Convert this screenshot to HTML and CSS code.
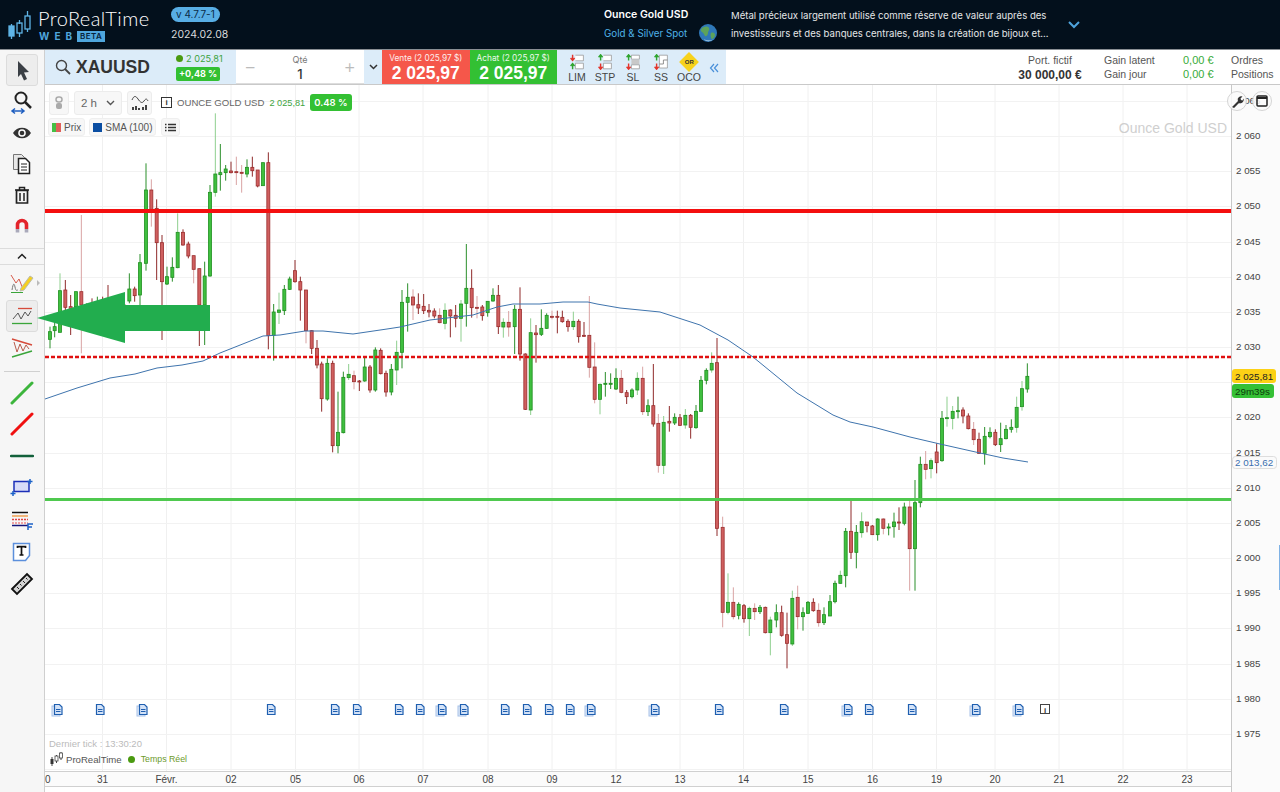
FILE: index.html

```html
<!DOCTYPE html>
<html lang="fr">
<head>
    <meta charset="UTF-8">
    <title>ProRealTime Web</title>
    <link rel="stylesheet" href="styles.css">
</head>
<body>
    <header class="topbar">
        <svg class="logo-mark" width="24" height="30" viewBox="0 0 24 30">
            <g fill="none" stroke="#5fb4e6" stroke-width="1.3">
                <path d="M3.5 14v3M3.5 29v-3M11.5 10v4M11.5 23v4M19.5 1v5M19.5 19v3"/>
                <rect x="1" y="16" width="5" height="10" fill="#5fb4e6"/>
                <rect x="9" y="13" width="5" height="10"/>
                <rect x="17" y="6" width="5" height="13"/>
            </g>
        </svg>
        <div class="brand">
            <div class="brand-name">ProRealTime</div>
            <div class="brand-sub"><span class="brand-web">WEB</span><span class="brand-beta">BETA</span></div>
        </div>
        <div class="release">
            <span class="version">v 4.7.7-1</span>
            <span class="release-date">2024.02.08</span>
        </div>
        <div class="instrument">
            <b>Ounce Gold USD</b>
            <span>Gold &amp; Silver Spot</span>
        </div>
        <svg class="globe" width="18" height="18" viewBox="0 0 18 18">
            <circle cx="9" cy="9" r="9" fill="#2f78b8"/>
            <path d="M3 4c3-2 6-2 7 0 1 2-1 3-1 5s-2 4-3 3-1-3-3-4-1-3 0-4zM12 9c2-1 4 0 4 2s-2 4-3 4-2-5-1-6z" fill="#5da35a"/>
            <path d="M5 15c3 2 7 2 9 0-2 3-7 3-9 0z" fill="#cfe3ee"/>
        </svg>
        <p class="description">Métal précieux largement utilisé comme réserve de valeur auprès des<br>investisseurs et des banques centrales, dans la création de bijoux et...</p>
        <svg class="expand" width="14" height="10" viewBox="0 0 14 10"><path d="M2 2l5 5 5-5" fill="none" stroke="#4ea3dc" stroke-width="2"/></svg>
    </header>

    <div class="workspace">
        <nav class="sidebar">
            <button class="tool tool-active">
                <svg width="20" height="24" viewBox="0 0 20 24"><path d="M6 3l11 11-5 .5 3 6.5-3 1.5-3-6.5-3 3z" fill="#3a3f45"/></svg>
            </button>
            <div class="tool">
                <svg width="26" height="26" viewBox="0 0 26 26"><circle cx="12" cy="9" r="5.5" fill="none" stroke="#222" stroke-width="2"/><path d="M16 13l6 6" stroke="#222" stroke-width="2.5"/><path d="M3 22h12M6 19.500L3 22l3 2.500M12 19.500l3 2.5-3 2.5" fill="none" stroke="#1f5fc0" stroke-width="1.5"/></svg>
            </div>
            <div class="tool">
                <svg width="20" height="14" viewBox="0 0 20 14"><path d="M1 7c4-7 14-7 18 0-4 7-14 7-18 0z" fill="#333"/><circle cx="10" cy="7" r="3.8" fill="#fff"/><circle cx="10" cy="7" r="2.3" fill="#333"/></svg>
            </div>
            <div class="tool">
                <svg width="20" height="22" viewBox="0 0 20 22"><path d="M1.500 1.500h8l3 3v12h-11z" fill="#e8e8e8" stroke="#777"/><path d="M6.500 5.500h7l4 4v11h-11z" fill="#fff" stroke="#222" stroke-width="1.5"/><path d="M9 11h6M9 14h6M9 17h6" stroke="#222"/></svg>
            </div>
            <div class="tool">
                <svg width="16" height="18" viewBox="0 0 16 18"><path d="M1 4h14M5.500 4V1.500h5V4" fill="none" stroke="#222" stroke-width="1.5"/><path d="M2.500 4.500h11V17h-11z" fill="none" stroke="#222" stroke-width="1.7"/><path d="M6 7v8M10 7v8" stroke="#222" stroke-width="1.5"/></svg>
            </div>
            <div class="tool">
                <svg width="14" height="15" viewBox="0 0 14 15"><path d="M2.500 11V7a4.500 4.500 0 0 1 9 0v4" fill="none" stroke="#e3242b" stroke-width="3.6"/><path d="M.7 11h3.600v3.500H.7zM9.700 11h3.600v3.500H9.700z" fill="#aab"/></svg>
            </div>
            <div class="tool-collapse">
                <svg width="10" height="7" viewBox="0 0 10 7"><path d="M1 5.500l4-4 4 4" fill="none" stroke="#222" stroke-width="1.5"/></svg>
            </div>
            <div class="tool tool-draw">
                <svg width="24" height="24" viewBox="0 0 24 24"><path d="M1 5l5 8 3-4 4 10" fill="none" stroke="#d85a4a"/><path d="M2 20c1-6 2-8 3-3s2 3 3 3" fill="none" stroke="#777"/><path d="M1 22.500h12" stroke="#3aa53a"/><path d="M11 18l9-12 3 2-9 12-4 1z" fill="#f5d020" stroke="#bba"/></svg>
                <i class="more"></i>
            </div>
            <button class="tool tool-active tool-channel">
                <svg width="22" height="18" viewBox="0 0 22 18"><path d="M7 1.500h14" stroke="#d64a3a" stroke-width="1.3"/><path d="M1 16.500h20" stroke="#3aa53a" stroke-width="1.3"/><path d="M2 12l5-6 3 6 4-7 3 4 3-5" fill="none" stroke="#555"/></svg>
            </button>
            <div class="tool tool-draw">
                <svg width="22" height="22" viewBox="0 0 22 22"><path d="M1 2l20 6" stroke="#d64a3a" stroke-width="1.5"/><path d="M1 20l20-6" stroke="#3aa53a" stroke-width="1.5"/><path d="M3 5l3 10 3-8 3 7 3-6 3 4" fill="none" stroke="#b85a4a"/></svg>
            </div>
            <hr class="tool-sep">
            <div class="tool tool-line"><svg width="24" height="24" viewBox="0 0 24 24"><path d="M2 22L22 2" stroke="#3cb53c" stroke-width="3" stroke-linecap="round"/></svg></div>
            <div class="tool tool-line"><svg width="24" height="24" viewBox="0 0 24 24"><path d="M2 22L22 2" stroke="#f01010" stroke-width="3" stroke-linecap="round"/></svg></div>
            <div class="tool tool-line"><svg width="24" height="6" viewBox="0 0 24 6"><path d="M1 3h22" stroke="#12603a" stroke-width="2.5" stroke-linecap="round"/></svg></div>
            <div class="tool tool-line"><svg width="24" height="18" viewBox="0 0 24 18"><rect x="4" y="3.500" width="15" height="10" fill="#d8dcf8" stroke="#1c2fb8" stroke-width="1.5"/><path d="M20 1v5M17.500 3.500h5M3 13v5M.5 15.500h5" stroke="#1c62c8" stroke-width="1.5"/></svg></div>
            <div class="tool tool-line tool-fib"><svg width="24" height="20" viewBox="0 0 24 20"><path d="M2 1.500h16" stroke="#111" stroke-width="1.5"/><path d="M2 5h16" stroke="#f0a050" stroke-width="1.5"/><path d="M2 8.500h16" stroke="#e04040" stroke-width="1.5" stroke-dasharray="2 1"/><path d="M2 12h16" stroke="#e88" stroke-width="1.5" stroke-dasharray="2 1"/><path d="M2 14.500h16" stroke="#14147a" stroke-width="1.5"/><path d="M18 19v-6h5M18 16h4" fill="none" stroke="#1c62c8" stroke-width="1.5"/></svg></div>
            <div class="tool tool-line"><svg width="20" height="20" viewBox="0 0 20 20"><path d="M1.500 1.500h16v12l-4 5h-12z" fill="#fff" stroke="#5b8fdc" stroke-width="1.5"/><path d="M5.500 6V4.700h8V6M9.500 5v8M7.500 13h4" fill="none" stroke="#111" stroke-width="1.7"/></svg></div>
            <div class="tool tool-line"><svg width="24" height="24" viewBox="0 0 24 24"><path d="M2 17L17 2l5 5L7 22z" fill="#d4d4d4" stroke="#111" stroke-width="1.8"/><path d="M7 15l2 2M10 12l1.500 1.500M13 9l2 2M16 6l1.500 1.500" stroke="#222"/></svg></div>
        </nav>

        <main class="main">
            <section class="tradebar">
                <div class="symbol">
                    <svg width="16" height="16" viewBox="0 0 16 16"><circle cx="6.500" cy="6.500" r="5" fill="none" stroke="#444" stroke-width="1.4"/><path d="M10 10l5 5" stroke="#444" stroke-width="1.8"/></svg>
                    <b class="symbol-name">XAUUSD</b>
                    <div class="symbol-quote">
                        <span class="symbol-last"><i class="dot"></i>2 025,81</span>
                        <span class="symbol-change">+0,48 %</span>
                    </div>
                </div>
                <div class="qty">
                    <span class="qty-step">−</span>
                    <div class="qty-value"><small>Qté</small><b>1</b></div>
                    <span class="qty-step">+</span>
                </div>
                <div class="qty-menu"><svg width="9" height="6" viewBox="0 0 9 6"><path d="M1 1l3.500 3.500L8 1" fill="none" stroke="#333" stroke-width="1.5"/></svg></div>
                <div class="side side-sell"><small>Vente (2 025,97 $)</small><b>2 025,97</b></div>
                <div class="side side-buy"><small>Achat (2 025,97 $)</small><b>2 025,97</b></div>
                <div class="orders">
                    <div class="order">
                        <svg width="18" height="20" viewBox="0 0 18 20"><path d="M7 1.500h10v7H7M7 11.500h10v7H7z" fill="#fff" stroke="#999"/><path d="M3.500 1v6M1 5l2.500 3L6 5" fill="none" stroke="#e3342b" stroke-width="1.8"/><path d="M3.500 19v-6M1 15l2.500-3L6 15" fill="none" stroke="#2fa52f" stroke-width="1.8"/></svg>
                        <span>LIM</span>
                    </div>
                    <div class="order">
                        <svg width="18" height="20" viewBox="0 0 18 20"><path d="M7 1.500h10v7H7M7 11.500h10v7H7z" fill="#fff" stroke="#999"/><path d="M3.500 8V2M1 4l2.500-3L6 4" fill="none" stroke="#2fa52f" stroke-width="1.8"/><path d="M3.500 12v6M1 16l2.500 3L6 16" fill="none" stroke="#e3342b" stroke-width="1.8"/></svg>
                        <span>STP</span>
                    </div>
                    <div class="order">
                        <svg width="18" height="20" viewBox="0 0 18 20"><path d="M7 1.500h10v5H7z" fill="#fff" stroke="#999"/><path d="M7 7h10v6H7z" fill="#c8c8c8"/><path d="M7 13.500h10v5H7z" fill="#fff" stroke="#999"/><path d="M3.500 8V2M1 4l2.500-3L6 4" fill="none" stroke="#2fa52f" stroke-width="1.8"/><path d="M3.500 12v6M1 16l2.500 3L6 16" fill="none" stroke="#e3342b" stroke-width="1.8"/></svg>
                        <span>SL</span>
                    </div>
                    <div class="order">
                        <svg width="18" height="20" viewBox="0 0 18 20"><path d="M7 1.500h10v16H7z" fill="#fff" stroke="#999"/><path d="M7 12.500h5v-5h5" fill="none" stroke="#777"/><path d="M3.500 8V2M1 4l2.500-3L6 4" fill="none" stroke="#2fa52f" stroke-width="1.8"/><path d="M3.500 12v6M1 16l2.500 3L6 16" fill="none" stroke="#e3342b" stroke-width="1.8"/></svg>
                        <span>SS</span>
                    </div>
                    <div class="order">
                        <div class="oco-mark"><em>OR</em></div>
                        <span>OCO</span>
                    </div>
                    <svg class="orders-fold" width="10" height="10" viewBox="0 0 10 10"><path d="M5 1L1.500 5 5 9M9 1L5.500 5 9 9" fill="none" stroke="#4a90d9" stroke-width="1.2"/></svg>
                </div>
                <div class="account">
                    <div class="account-balance"><span>Port. fictif</span><b>30 000,00 €</b></div>
                    <div class="account-labels"><span>Gain latent</span><span>Gain jour</span></div>
                    <div class="account-gains"><span>0,00 €</span><span>0,00 €</span></div>
                    <div class="account-links"><span>Ordres</span><span>Positions</span></div>
                </div>
            </section>

            <section class="chart">
                <div class="plot">
                    <svg id="plot" width="1186" height="686" viewBox="45 85 1186 686"></svg>
                    <div class="legend">
                        <div class="legend-row">
                            <span class="chart-btn btn-lock"><svg width="8" height="14" viewBox="0 0 8 14"><rect x="1" y="1" width="6" height="5" rx="2.500" fill="none" stroke="#aaa" stroke-width="1.5"/><rect x="1" y="7" width="6" height="6" rx="2" fill="#aaa"/></svg></span>
                            <span class="chart-btn btn-period">2 h<svg width="9" height="6" viewBox="0 0 9 6"><path d="M1 1l3.500 3.500L8 1" fill="none" stroke="#555" stroke-width="1.4"/></svg></span>
                            <span class="chart-btn btn-indic"><svg width="18" height="16" viewBox="0 0 18 16"><path d="M1 5c2-5 4-4 6-1s4 5 6 2 3-2 4 0" fill="none" stroke="#444"/><path d="M2 15v-3M5 15v-4M8 15v-2M12 15v-3M15 15v-5" stroke="#444" stroke-width="2"/></svg></span>
                            <span class="info-mark">i</span>
                            <span class="legend-name">OUNCE GOLD USD</span>
                            <span class="legend-last">2 025,81</span>
                            <span class="legend-change">0.48 %</span>
                        </div>
                        <div class="legend-row legend-series">
                            <span class="chip"><i class="swatch-price"></i>Prix</span>
                            <span class="chip"><i class="swatch-sma"></i>SMA (100)</span>
                            <span class="chip chip-list"><svg width="11" height="9" viewBox="0 0 11 9"><path d="M3 1.500h8M3 4.500h8M3 7.500h8" stroke="#333" stroke-width="1.3"/><path d="M0 1.500h1.500M0 4.500h1.500M0 7.500h1.500" stroke="#333" stroke-width="1.5"/></svg></span>
                        </div>
                    </div>
                    <div class="watermark">Ounce Gold USD</div>
                    <div class="tick-info">
                        <div class="tick-time">Dernier tick : 13:30:20</div>
                        <div class="tick-source">
                            <svg width="13" height="14" viewBox="0 0 13 14"><path d="M2 5v9M6.500 3v8M11 0v8" stroke="#444"/><rect x=".5" y="7" width="3" height="5" fill="#333"/><rect x="5" y="4" width="3" height="5" fill="#fff" stroke="#444" stroke-width=".8"/><rect x="9.500" y="1" width="3" height="5" fill="#fff" stroke="#444" stroke-width=".8"/></svg>
                            <span>ProRealTime</span><i class="dot"></i><em>Temps Réel</em>
                        </div>
                    </div>
                </div>
                <div class="price-axis">
                    <svg id="prices" width="48" height="707" viewBox="1232 85 48 707"></svg>
                    <i class="scroll-mark"></i>
                </div>
                <div class="time-axis">
                    <svg id="times" width="1186" height="15" viewBox="45 772 1186 15"></svg>
                </div>
                <div class="chart-tools">
                    <span class="round-btn"><svg width="13" height="13" viewBox="0 0 13 13"><path d="M1 12l6-6a3.500 3.500 0 0 1 4.500-4.500L9.500 3.500l.5 1.500 1.500.5 1-2A3.500 3.500 0 0 1 8 8l-5 5z" fill="#333"/></svg></span>
                    <span class="round-btn"><svg width="12" height="12" viewBox="0 0 12 12"><rect x="1" y="1" width="10" height="10" rx="1" fill="none" stroke="#222" stroke-width="1.5"/><path d="M1 3h10" stroke="#222" stroke-width="2"/></svg></span>
                </div>
            </section>
        </main>
    </div>

    <svg class="arrow-note" width="1280" height="792" viewBox="0 0 1280 792">
        <polygon points="37,318 125,292 125,305 210,305 210,331 125,331 125,343" fill="#22ad4e"/>
    </svg>

    <script src="chart.js"></script>
</body>
</html>
```

FILE: styles.css

```css
* {
    box-sizing: border-box;
}

body, html {
    margin: 0;
    padding: 0;
    width: 100%;
    height: 100%;
    overflow: hidden;
    background-color: white;
    font-family: "Liberation Sans", Arial, sans-serif;
    color: #444;
}

/* top bar */
.topbar {
    height: 50px;
    display: flex;
    align-items: center;
    background-color: #03101c;
    border-bottom: 1px solid #8a8f94;
    color: #e4e6e8;
    font-family: Inter, sans-serif;
}

.logo-mark {
    margin-left: 8px;
    flex: none;
}

.brand {
    width: 133px;
    margin-left: 6px;
}

.brand-name {
    font-family: Lato, sans-serif;
    font-weight: 300;
    font-size: 20px;
    line-height: 22px;
    letter-spacing: 0.4px;
    color: white;
}

.brand-sub {
    display: flex;
    align-items: center;
    margin-top: 1px;
}

.brand-web {
    margin-left: 1px;
    font-size: 10px;
    font-weight: 700;
    letter-spacing: 5px;
    color: #4fa6dd;
}

.brand-beta {
    background-color: #4fa6dd;
    color: #06223a;
    font-size: 8px;
    font-weight: 600;
    line-height: 11px;
    padding: 0 3px;
    letter-spacing: 0.4px;
}

.release {
    width: 433px;
    display: flex;
    flex-direction: column;
    align-items: flex-start;
    gap: 6px;
}

.version {
    background-color: #58aee5;
    color: #0b2c48;
    font-size: 10px;
    line-height: 15px;
    padding: 0 5px;
    border-radius: 8px;
}

.release-date {
    font-size: 10.5px;
    line-height: 14px;
    color: #d8dadc;
}

.instrument {
    width: 95px;
    display: flex;
    flex-direction: column;
    gap: 7px;
    font-size: 10.5px;
    line-height: 12px;
    white-space: nowrap;
}

.instrument b {
    color: white;
    font-weight: 600;
}

.instrument span {
    font-size: 9.8px;
    color: #4fb2e8;
}

.globe {
    margin-top: 17px;
    flex: none;
}

.description {
    margin: 0 0 0 14px;
    width: 336px;
    font-size: 9.6px;
    line-height: 18px;
    white-space: nowrap;
}

.expand {
    flex: none;
}

/* work area */
.workspace {
    display: flex;
    height: 742px;
}

.sidebar {
    width: 45px;
    flex: none;
    display: flex;
    flex-direction: column;
    align-items: center;
    padding-top: 4px;
    background-color: #f6f6f6;
    border-right: 1px solid #cfcfcf;
}

.tool {
    position: relative;
    width: 32px;
    height: 31px;
    display: flex;
    align-items: center;
    justify-content: center;
    flex: none;
    padding: 0;
    border: 1px solid transparent;
    background: none;
}

.tool-active {
    height: 32px;
    background-color: #ededed;
    border: 1px solid #dcdcdc;
    border-radius: 3px;
}

.tool-collapse {
    width: 100%;
    height: 17px;
    margin-top: 7px;
    display: flex;
    align-items: center;
    justify-content: center;
    border-top: 1px solid #dcdcdc;
    border-bottom: 1px solid #dcdcdc;
}

.tool-collapse + .tool-draw {
    margin-top: 1px;
}

.tool-draw {
    height: 32px;
}

.tool-channel {
    margin-top: 2px;
}

.more {
    position: absolute;
    right: -3px;
    top: 13px;
    border-left: 3px solid #bbb;
    border-top: 3px solid transparent;
    border-bottom: 3px solid transparent;
}

.tool-sep {
    width: 36px;
    margin: 7px 0 5px;
    border: 0;
    border-top: 1px solid #d0d0d0;
}

.tool-line {
    height: 31.5px;
}

.tool-fib {
    margin-top: 2px;
}

/* trading bar */
.main {
    width: 1235px;
    flex: none;
    display: flex;
    flex-direction: column;
}

.tradebar {
    height: 35px;
    flex: none;
    display: flex;
    border-bottom: 1px solid #c9c9c9;
    font-family: Inter, sans-serif;
}

.symbol {
    width: 191px;
    display: flex;
    align-items: center;
    padding-left: 10px;
    background-color: #dcecf9;
}

.symbol-name {
    margin-left: 5px;
    width: 100px;
    font-family: "Liberation Sans", sans-serif;
    font-size: 17.5px;
    color: #333;
}

.symbol-quote {
    display: flex;
    flex-direction: column;
    align-items: flex-start;
    gap: 3px;
    white-space: nowrap;
}

.symbol-last {
    display: flex;
    align-items: center;
    gap: 3px;
    font-size: 9.2px;
    line-height: 11px;
    color: #3ea33e;
}

.dot {
    width: 7px;
    height: 7px;
    border-radius: 50%;
    background-color: #4a9a10;
    flex: none;
}

.symbol-change {
    background-color: #33c033;
    color: white;
    font-size: 9px;
    font-weight: 700;
    line-height: 14px;
    padding: 0 3px;
    border-radius: 2px;
}

.qty {
    width: 128px;
    display: flex;
    align-items: center;
    justify-content: space-between;
    padding: 0 8px;
    background-color: white;
    border-bottom: 1px solid #ddd;
}

.qty-step {
    font-size: 19px;
    font-weight: 300;
    color: #bbb;
}

.qty-value {
    display: flex;
    flex-direction: column;
    align-items: center;
    color: #444;
    padding-top: 3px;
}

.qty-value small {
    font-size: 9px;
    line-height: 12px;
    color: #777;
}

.qty-value b {
    font-size: 13px;
    line-height: 17px;
    font-weight: 500;
    color: #333;
}

.qty-menu {
    width: 18px;
    display: flex;
    align-items: center;
    justify-content: center;
    background-color: #dcecf9;
}

.side {
    width: 87.5px;
    display: flex;
    flex-direction: column;
    align-items: center;
    color: white;
    white-space: nowrap;
}

.side small {
    font-size: 8.3px;
    line-height: 12px;
    margin-top: 2px;
    opacity: 0.9;
}

.side b {
    font-family: "Liberation Sans", sans-serif;
    font-size: 17.5px;
    line-height: 19px;
}

.side-sell {
    background-color: #f5574a;
}

.side-buy {
    background-color: #33c033;
}

.orders {
    width: 169px;
    display: flex;
    align-items: flex-start;
    padding: 4px 0 0 6px;
    background-color: #dcecf9;
}

.order {
    width: 28px;
    display: flex;
    flex-direction: column;
    align-items: center;
    font-family: "Liberation Sans", sans-serif;
    font-size: 10.5px;
    line-height: 12px;
    color: #444;
}

.order svg {
    height: 16px;
    margin-bottom: 1px;
}

.oco-mark {
    width: 14px;
    height: 14px;
    margin: 1px 0 2px;
    background-color: #f7d21c;
    transform: rotate(45deg);
    display: flex;
    align-items: center;
    justify-content: center;
}

.oco-mark em {
    transform: rotate(-45deg);
    font-size: 6px;
    font-weight: 700;
    font-style: normal;
    line-height: 6px;
    color: #333;
}

.orders-fold {
    margin: 9px 0 0 6px;
}

.account {
    flex: 1;
    display: flex;
    font-family: "Liberation Sans", sans-serif;
    font-size: 10.5px;
    color: #555;
    padding-top: 4px;
}

.account > div {
    display: flex;
    flex-direction: column;
    gap: 2px;
    white-space: nowrap;
}

.account span {
    line-height: 12px;
}

.account-balance {
    width: 64px;
    margin-left: 292px;
    align-items: center;
}

.account-balance b {
    font-size: 12px;
    line-height: 14px;
    color: #333;
}

.account-labels {
    width: 79px;
    margin-left: 22px;
}

.account-gains {
    width: 48px;
    color: #38ab38;
    font-size: 11px;
}

.account-links {
    color: #555;
}

/* chart */
.chart {
    position: relative;
    flex: 1;
    display: grid;
    grid-template-columns: 1186px 49px;
    grid-template-rows: 686px 16px 1fr;
}

.plot {
    position: relative;
    overflow: hidden;
}

#plot, #prices, #times {
    display: block;
}

.legend {
    position: absolute;
    top: 5px;
    left: 4px;
    display: flex;
    flex-direction: column;
    gap: 3px;
}

.legend-row {
    display: flex;
    align-items: center;
    height: 25px;
    font-size: 9.6px;
    white-space: nowrap;
}

.chart-btn {
    height: 24px;
    display: flex;
    align-items: center;
    justify-content: center;
    background-color: #f7f7f7;
    border: 1px solid #ececec;
    border-radius: 3px;
}

.btn-lock {
    width: 20px;
}

.btn-period {
    width: 48px;
    margin-left: 5px;
    gap: 9px;
    font-size: 11.5px;
    color: #666;
}

.btn-indic {
    width: 25px;
    margin-left: 5px;
}

.info-mark {
    width: 11px;
    height: 11px;
    margin: 0 5px 0 9px;
    border: 1px solid #333;
    font-size: 8px;
    line-height: 9px;
    font-weight: 700;
    text-align: center;
    color: #333;
}

.legend-name {
    color: #666;
}

.legend-last {
    margin-left: 5px;
    font-size: 9.2px;
    color: #3ea33e;
}

.legend-change {
    margin-left: 5px;
    background-color: #33c033;
    color: white;
    font-family: Inter, sans-serif;
    font-weight: 600;
    font-size: 9.5px;
    line-height: 17px;
    padding: 0 4px;
    border-radius: 3px;
}

.legend-series {
    height: 18px;
    gap: 4px;
    margin-left: -1px;
    font-size: 10px;
}

.chip {
    height: 18px;
    display: flex;
    align-items: center;
    gap: 3px;
    padding: 0 3px;
    background-color: #f7f7f7;
    border: 1px solid #efefef;
    border-radius: 3px;
    color: #555;
}

.chip-list {
    margin-left: 1px;
}

.swatch-price {
    width: 9px;
    height: 9px;
    background: linear-gradient(90deg, #44c044 50%, #e0605a 50%);
}

.swatch-sma {
    width: 9px;
    height: 9px;
    background-color: #0b4ea2;
}

.watermark {
    position: absolute;
    top: 35px;
    right: 4px;
    font-size: 14px;
    color: #cfcfcf;
}

.tick-info {
    position: absolute;
    left: 4px;
    bottom: 5px;
}

.tick-time {
    font-size: 9.5px;
    color: #bbb;
    margin-bottom: 3px;
}

.tick-source {
    display: flex;
    align-items: center;
    font-size: 9.6px;
    color: #555;
}

.tick-source svg {
    margin: 0 3px 0 1px;
}

.tick-source .dot {
    margin: 0 6px;
}

.tick-source em {
    font-style: normal;
    font-size: 8.8px;
    color: #6d9a2c;
}

.price-axis {
    position: relative;
    grid-column: 2;
    grid-row: 1 / 4;
    background-color: #fbfbfb;
    border-left: 1px solid #c8c8c8;
}

.scroll-mark {
    position: absolute;
    right: 0;
    top: 460px;
    width: 1px;
    height: 45px;
    background-color: #7fb2e5;
}

.time-axis {
    grid-column: 1;
    grid-row: 2;
    background-color: #fbfbfb;
    border-top: 1px solid #d0d0d0;
    border-bottom: 1px solid #d0d0d0;
}

.chart-tools {
    position: absolute;
    top: 6px;
    right: 8px;
    display: flex;
    gap: 5px;
}

.round-btn {
    width: 20px;
    height: 20px;
    display: flex;
    align-items: center;
    justify-content: center;
    background-color: rgba(250, 250, 250, 0.85);
    border: 1px solid #d4d4d4;
    border-radius: 50%;
}

.arrow-note {
    position: absolute;
    top: 0;
    left: 0;
    pointer-events: none;
}
```

FILE: chart.js

```js
const NS = 'http://www.w3.org/2000/svg';

function add(parent, name, attrs, text) {
    const el = document.createElementNS(NS, name);
    for (const k in attrs) el.setAttribute(k, attrs[k]);
    if (text) el.textContent = text;
    parent.appendChild(el);
    return el;
}

// bars: x, body top, body bottom, wick top, wick bottom, g/r, pale wick
// values are read at 3x from the origin of each group
const groups = [
    { ox: 40, oy: 100, bars: [
        [30,695,718,680,745,'g'],[44,680,692,665,712,'g'],[60,572,697,520,697,'g',1],[76,570,622,540,630,'r'],
        [92,620,660,585,705,'r'],[108,575,620,575,670,'g'],[124,575,615,345,760,'r',1],[140,640,670,610,680,'g'],
        [156,640,670,595,680,'r'],[172,640,670,590,680,'g'],[188,640,670,590,680,'r'],[204,630,660,555,680,'r'],
        [220,630,660,600,670,'g'],[236,620,650,590,660,'g'],[252,615,640,590,650,'r'],[268,567,603,520,610,'g'],
        [284,567,587,560,605,'r'],[300,488,585,462,615,'g'],[318,270,490,190,512,'g'],[334,270,328,238,380,'r',1],
        [350,325,428,298,540,'r'],[366,428,545,405,720,'r'],[381,530,552,500,555,'g'],[397,502,532,472,545,'g'],
        [413,397,503,340,505,'g',1],[429,397,435,388,437,'r'],[445,432,468,425,475,'r'],[461,467,508,467,550,'r',1],
        [478,506,615,506,738,'r'],[494,528,615,485,735,'g'],[510,277,528,255,530,'g'],[526,222,277,40,290,'g',1],
        [541,218,224,132,272,'g'],[557,207,218,195,242,'g'],[573,213,218,185,220,'r'],[589,215,218,170,255,'r',1],
        [605,217,220,195,278,'r',1],[621,202,222,178,232,'g'],[637,202,212,170,230,'r'],[653,210,258,210,262,'r'],
        [669,188,257,188,257,'g'],[685,188,707,157,748,'r'],[701,636,706,612,782,'g'],[717,630,637,578,672,'g',1],
        [733,568,632,555,645,'g'],[749,537,568,530,570,'g'],[765,512,545,480,548,'r'],[781,545,570,530,662,'r'],
        [798,570,692,570,730,'r',1],[815,692,745,690,762,'r'],[831,745,795,720,805,'r']
    ] },
    { ox: 320, oy: 240, bars: [
        [5,372,476,365,515,'r'],[22,370,477,355,482,'g'],[38,370,617,362,637,'r'],[54,577,617,455,640,'g'],
        [70,412,578,395,580,'g'],[86,403,413,372,420,'g',1],[102,407,425,392,448,'r',1],[118,423,426,420,453,'r'],
        [134,381,423,350,425,'g'],[150,381,450,375,458,'r'],[166,330,450,322,455,'g'],[182,331,401,325,403,'r'],
        [198,400,456,392,470,'r'],[214,388,456,372,466,'g'],[230,337,390,302,435,'g',1],[246,187,337,150,385,'g'],
        [263,172,187,130,275,'g'],[279,171,195,148,240,'r',1],[295,194,204,160,222,'r'],[311,199,212,162,222,'r'],
        [327,211,216,192,232,'r'],[343,213,228,205,235,'r'],[359,226,248,205,250,'r',1],[375,211,250,190,268,'g',1],
        [391,210,228,208,292,'r'],[407,226,235,195,262,'r'],[423,192,235,180,305,'g',1],[439,145,190,12,260,'g'],
        [455,145,203,88,233,'r'],[471,202,204,168,235,'r',1],[487,201,227,195,242,'r'],[503,184,218,184,230,'g'],
        [519,166,183,145,185,'g'],[535,166,260,135,282,'r'],[550,247,261,235,293,'g',1],[566,247,261,213,290,'r',1],
        [584,208,260,195,342,'g'],[600,208,342,142,362,'r'],[616,342,508,340,510,'r'],[632,278,510,235,525,'g',1],
        [648,279,284,255,368,'r'],[664,265,283,208,288,'g'],[680,226,265,220,267,'g'],[696,229,231,212,238,'r',1],
        [712,229,231,212,280,'r'],[727,232,245,212,248,'r'],[744,244,260,238,275,'r'],[760,244,260,215,270,'g',1],
        [776,244,290,238,308,'r'],[792,286,288,246,290,'r'],[808,286,382,168,413,'r',1],[824,381,478,307,490,'r',1],
        [840,433,478,430,523,'g',1],[856,430,433,396,470,'g'],[872,430,432,400,447,'g'],[888,415,447,385,450,'g']
    ] },
    { ox: 620, oy: 340, bars: [
        [4,115,157,90,160,'r',1],[20,158,170,150,192,'r'],[36,150,170,145,175,'g'],[52,115,150,97,165,'g',1],
        [68,115,215,80,225,'r',1],[84,197,215,178,228,'g'],[100,197,252,72,260,'r'],[115,250,376,222,398,'r',1],
        [131,247,376,228,402,'g',1],[148,244,249,198,275,'r'],[164,232,249,220,255,'g'],[180,233,256,222,258,'r'],
        [196,226,255,207,266,'g',1],[212,226,262,222,296,'r'],[228,214,263,195,266,'g'],[243,121,214,108,215,'g'],
        [259,91,121,85,133,'g'],[275,70,90,37,98,'g',1],[291,68,565,-6,588,'r'],[308,562,817,530,862,'r',1],
        [324,787,817,700,823,'g',1],[340,787,830,742,838,'r',1],[356,793,826,787,838,'g'],[372,797,836,792,848,'r'],
        [388,805,836,800,888,'g',1],[404,805,815,790,840,'r',1],[420,802,815,795,822,'g'],[436,802,878,800,880,'r'],
        [451,840,878,830,946,'g',1],[469,818,840,793,862,'g'],[485,818,886,797,890,'r'],[501,884,910,818,985,'r'],
        [517,775,912,752,918,'g',1],[533,772,830,737,868,'r',1],[549,818,830,802,872,'g'],[564,787,820,783,822,'g'],
        [580,787,812,775,815,'r'],[596,811,848,790,860,'r',1],[612,824,848,802,855,'g'],[630,785,828,765,828,'g'],
        [645,730,785,722,790,'g'],[661,706,730,692,732,'g',1]
    ] },
    { ox: 840, oy: 350, bars: [
        [17,544,677,534,712,'g'],[33,544,607,450,627,'r'],[49,547,607,525,655,'g'],[65,515,548,487,563,'g',1],
        [81,516,527,516,547,'r'],[97,528,554,525,555,'r'],[113,507,554,505,572,'g'],[130,507,535,505,553,'r',1],
        [146,531,534,520,556,'g'],[162,516,530,488,563,'g'],[177,516,518,472,540,'r'],[193,471,520,458,526,'g'],
        [209,471,596,452,722,'r',1],[225,458,596,390,722,'g'],[241,343,458,320,472,'g'],[257,343,358,303,388,'r',1],
        [273,332,356,325,385,'g',1],[290,306,338,280,370,'r'],[306,205,332,183,335,'g'],[321,203,206,140,230,'g',1],
        [338,184,205,168,238,'g',1],[354,182,184,140,205,'g'],[369,180,198,172,220,'r'],[385,198,236,190,238,'r'],
        [401,238,269,216,285,'r',1],[417,268,310,248,312,'r'],[434,259,310,231,344,'g'],[450,247,260,232,265,'g'],
        [466,247,284,238,288,'r'],[482,266,284,218,306,'g'],[498,238,266,225,268,'g'],[514,232,238,208,248,'g'],
        [530,172,232,140,248,'g',1],[546,116,170,93,182,'g',1],[562,79,117,40,128,'g']
    ] }
];

const sma = [[45,399],[77,388],[110,378],[135,374],[157,368],[182,365],[203,361],[220,353],[263,336],[280,335],
    [305,331],[323,331],[353,334],[387,329],[400,327],[430,320],[473,315],[497,307],[513,304],[540,304],[563,302],
    [588,302],[597,304],[620,308],[660,312],[700,325],[728,340],[753,357],[797,393],[833,415],[850,422],[873,427],
    [910,437],[940,444],[980,453],[1003,458],[1028,462]];

const dayX = [102.5,166.5,231,295.5,359,423,488,552,616,680,743.5,808,872.5,936.5,995,1059,1123,1187];
const dayNames = ['31','Févr.','02','05','06','07','08','09','12','13','14','15','16','19','20','21','22','23'];

const plot = document.getElementById('plot');

// grid
for (const x of dayX) {
    add(plot, 'line', { x1: x, x2: x, y1: 85, y2: 771, stroke: '#f0f0f0' });
}
for (let p = 2065; p >= 1970; p -= 5) {
    const y = Math.round(136 + (2060 - p) * 7.034) + 0.5;
    add(plot, 'line', { x1: 45, x2: 1231, y1: y, y2: y, stroke: '#f2f2f2' });
}

// candles
for (const g of groups) {
    for (const b of g.bars) {
        const x = g.ox + b[0] / 3;
        const green = b[5] === 'g';
        const wick = b[6] ? (green ? '#8fcf8f' : '#d9a3a3') : (green ? '#2b8f2b' : '#8f2a2a');
        add(plot, 'line', { x1: x, x2: x, y1: g.oy + b[3] / 3, y2: g.oy + b[4] / 3, stroke: wick });
        add(plot, 'rect', {
            x: x - 1.5, y: g.oy + b[1] / 3, width: 3, height: Math.max((b[2] - b[1]) / 3, 1),
            fill: green ? '#3fbf3f' : '#cf5f5f', stroke: green ? '#1f8f1f' : '#9a2c2c', 'stroke-width': 0.8
        });
    }
}

// moving average
add(plot, 'polyline', { points: sma.join(' '), fill: 'none', stroke: '#3f74ad', 'stroke-width': 1 });

// levels
add(plot, 'rect', { x: 45, y: 209, width: 1186, height: 4, fill: '#f40f0f' });
add(plot, 'line', { x1: 45, x2: 1231, y1: 357, y2: 357, stroke: '#e01010', 'stroke-width': 2.5, 'stroke-dasharray': '4 2' });
add(plot, 'rect', { x: 45, y: 498, width: 1186, height: 3, fill: '#4fc94f' });

// news marks
const news = [[58,1],[100],[143,1],[271],[335],[357],[399],[420],[442,1],[464,1],[505],[527],[549],[570],[591,1],
    [655,1],[719],[784],[848,1],[869],[912],[976,1],[1019,1]];
for (const n of news) {
    const x = n[0] - 4, y = 704;
    if (n[1]) add(plot, 'rect', { x: x - 2, y: y + 2, width: 8, height: 10, fill: '#dfe9f8', stroke: '#a8c2e8', 'stroke-width': 1 });
    add(plot, 'path', { d: `M${x + 0.5} ${y + 0.5}h5l2.5 2.5v7.5h-7.5z`, fill: '#d3e2f7', stroke: '#1f5fb0', 'stroke-width': 1.2 });
    add(plot, 'path', { d: `M${x + 2} ${y + 5.5}h4.5M${x + 2} ${y + 7.5}h4.5`, stroke: '#1f5fb0', 'stroke-width': 1 });
}
add(plot, 'rect', { x: 1040.5, y: 704.5, width: 9, height: 9, fill: '#fff', stroke: '#444' });
add(plot, 'text', { x: 1045, y: 712.5, 'text-anchor': 'middle', 'font-size': 8, 'font-weight': 700, fill: '#333' }, 'i');

// price axis
const prices = document.getElementById('prices');
for (let p = 2065; p >= 1975; p -= 5) {
    if (p === 2025) continue;
    const y = 139 + (2060 - p) * 7.034;
    const label = p >= 2000 ? '2 ' + String(p).slice(1) : '1 ' + String(p).slice(1);
    add(prices, 'text', { x: 1236, y: y, 'font-size': 9.8, fill: '#444' }, label);
}
add(prices, 'rect', { x: 1232, y: 369, width: 44, height: 14, rx: 3, fill: '#fcd116' });
add(prices, 'text', { x: 1235, y: 380, 'font-size': 9.8, fill: '#222' }, '2 025,81');
add(prices, 'rect', { x: 1232, y: 384, width: 42, height: 14, rx: 3, fill: '#35c035' });
add(prices, 'text', { x: 1235, y: 395, 'font-size': 9.8, fill: '#0d3b0d' }, '29m39s');
add(prices, 'rect', { x: 1232.5, y: 456.5, width: 44, height: 12, rx: 3, fill: '#fafafa', stroke: '#ddd' });
add(prices, 'text', { x: 1235, y: 466, 'font-size': 9.8, fill: '#3a6fb0' }, '2 013,62');

// time axis
const times = document.getElementById('times');
add(times, 'text', { x: 45, y: 783, 'font-size': 10, fill: '#444' }, '0');
dayX.forEach((x, i) => {
    add(times, 'text', { x: x, y: 783, 'text-anchor': 'middle', 'font-size': 10, fill: '#444' }, dayNames[i]);
});
```
